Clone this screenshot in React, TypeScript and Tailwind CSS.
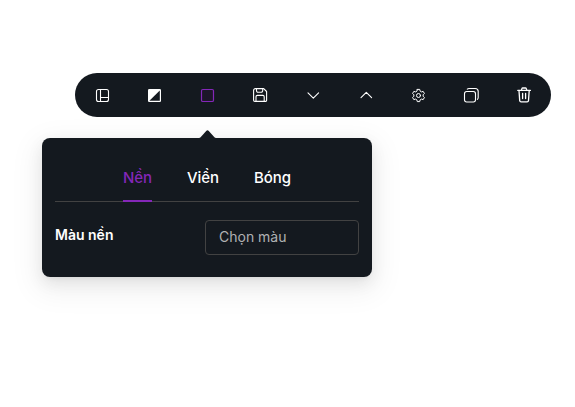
import type { ReactNode } from "react";

function Icon({ children }: { children: ReactNode }) {
  return (
    <button className="flex size-5 items-center justify-center text-white">
      <svg width="20" height="20" viewBox="0 0 20 20" fill="none" stroke="currentColor" strokeWidth="1.1" strokeLinecap="round" strokeLinejoin="round">
        {children}
      </svg>
    </button>
  );
}

function Toolbar() {
  return (
    <div className="ml-[75px] flex h-11 w-[476px] items-center justify-between rounded-full bg-[#14191f] px-[17px]">
      <Icon>
        <rect x="4.5" y="4.5" width="12" height="12" rx="2" />
        <path d="M8.5 4.5v12M8.5 12.5h8" />
      </Icon>
      <Icon>
        <rect x="3" y="4" width="13" height="13" rx="1.3" fill="currentColor" stroke="none" />
        <path d="M14.8 5.4v10.4H4.4z" fill="#14191f" stroke="none" />
      </Icon>
      <Icon>
        <rect x="3.5" y="4.5" width="12" height="12" rx="1.3" fill="#1d1629" stroke="#8427b8" strokeWidth="1.2" />
      </Icon>
      <Icon>
        <path d="M5.4 3.6h8.3l2.9 2.9v8.7a1.2 1.2 0 0 1-1.2 1.2H4.8a1.2 1.2 0 0 1-1.2-1.2V5.4a1.8 1.8 0 0 1 1.8-1.8z" />
        <path d="M6.5 3.6v2.1a1.5 1.5 0 0 0 1.5 1.5h3.2a1.5 1.5 0 0 0 1.5-1.5V3.6M6 16.4v-4.7a1.3 1.3 0 0 1 1.3-1.3h5.6a1.3 1.3 0 0 1 1.3 1.3v4.7" />
      </Icon>
      <Icon>
        <path d="M5 7.9l5.3 5.2 5.3-5.2" />
      </Icon>
      <Icon>
        <path d="M5 12.6l5.3-5.2 5.3 5.2" />
      </Icon>
      <Icon>
        <g transform="translate(-.8 0)">
          <path strokeWidth="1" d="M9.1 4.4h2.4l.5 1.8 1.2.7 1.8-.5 1.2 2.1-1.3 1.3v1.4l1.3 1.3-1.2 2.1-1.8-.5-1.2.7-.5 1.8H9.1l-.5-1.8-1.2-.7-1.8.5-1.2-2.1 1.3-1.3V9.8L4.4 8.5l1.2-2.1 1.8.5 1.2-.7z" />
          <circle cx="10.3" cy="10.5" r="2" strokeWidth="1" />
        </g>
      </Icon>
      <Icon>
        <rect x="3.5" y="6.5" width="11" height="10.5" rx="2.2" />
        <path d="M6.3 4.1c.5-.4 1-.6 1.7-.6h6.2a3 3 0 0 1 3 3v6.1c0 .8-.3 1.4-.8 1.8" />
      </Icon>
      <Icon>
        <path strokeWidth="1.3" d="M3.8 5.4h12.6M7.4 5.1l.5-1.5a.9.9 0 0 1 .9-.6h2.6a.9.9 0 0 1 .9.6l.5 1.5M5 5.6l.7 10a1.4 1.4 0 0 0 1.4 1.2h6a1.4 1.4 0 0 0 1.4-1.2l.7-10M8.6 8.5v5M11.6 8.5v5" />
      </Icon>
    </div>
  );
}

export default function App() {
  return (
    <main className="h-[407px] w-[575px] overflow-hidden bg-white pt-[73px] font-['Inter',sans-serif] text-[15px] text-white">
      <Toolbar />
      <section className="relative mt-[21px] ml-[42px] h-[139px] w-[330px] rounded-lg bg-[#14191f] px-[13px] pt-6 shadow-[0_6px_16px_0_rgba(0,0,0,0.08),0_3px_6px_-4px_rgba(0,0,0,0.12),0_9px_28px_8px_rgba(0,0,0,0.05)]">
        <svg className="absolute -top-2 left-[157px]" width="17" height="8" viewBox="0 0 17 8">
          <path d="M0 8Q.9 7.9 1.6 7.2L7.2 1Q8.5-.3 9.8 1L15.4 7.2Q16.1 7.9 17 8Z" fill="#14191f" />
        </svg>
        <nav className="flex h-10 justify-center gap-9 border-b border-[#424242] leading-8 font-medium">
          <button className="-mb-px flex h-10 w-[29px] justify-center border-b-2 border-[#8427b8] text-[#8427b8]">Nền</button>
          <button className="flex w-[30px] justify-center">Viền</button>
          <button className="flex w-[37px] justify-center">Bóng</button>
        </nav>
        <div className="mt-[18px] flex items-start justify-between">
          <label className="text-[14px] leading-[30px] font-semibold">Màu nền</label>
          <div className="flex h-[35px] w-[154px] items-center rounded border border-[#424242] px-[13px] pb-0.5 text-[14px] text-[#b0b1b3]">Chọn màu</div>
        </div>
      </section>
    </main>
  );
}
